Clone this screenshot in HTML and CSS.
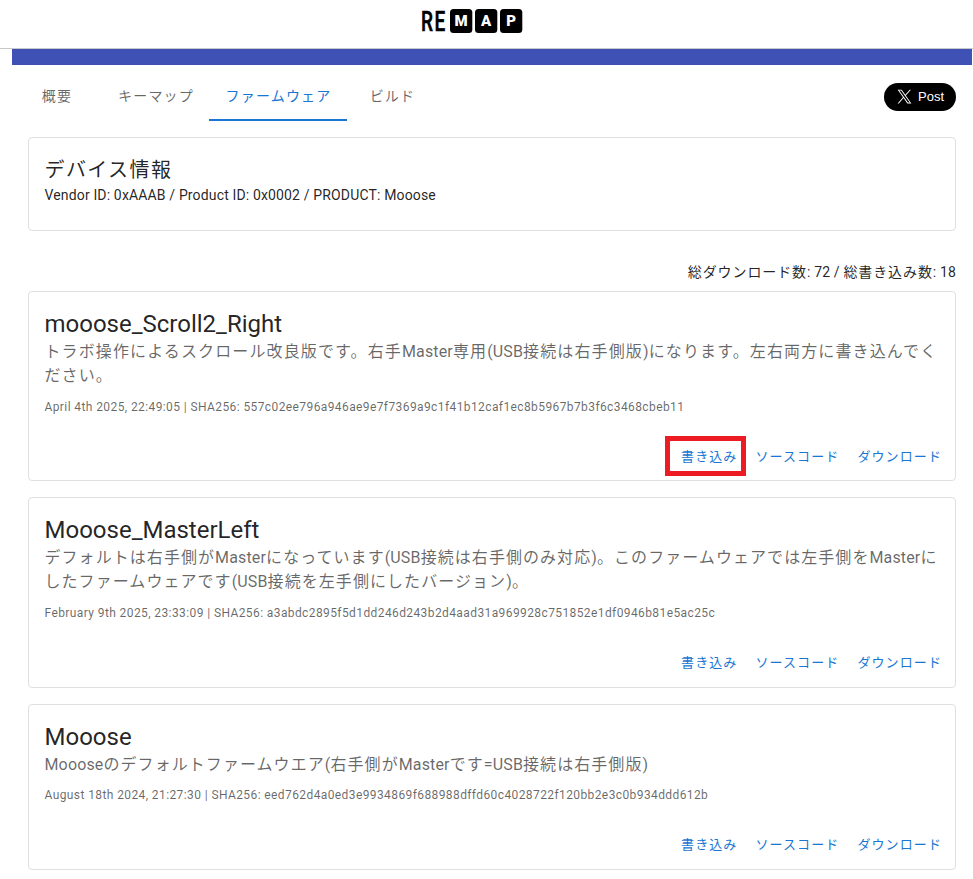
FILE: index.html
```html
<!DOCTYPE html>
<html lang="ja">
<head>
<meta charset="utf-8">
<title>Remap</title>
<link rel="stylesheet" href="styles.css">
</head>
<body>
<header class="header">
  <svg class="logo" width="104" height="48" viewBox="-2 -8 104 48" role="img" aria-label="REMAP">
    <text class="logo-re" transform="translate(-0.1 23.3) scale(.68 1)">RE</text>
    <rect x="29" y="1" width="22.3" height="24" rx="3.5"/>
    <rect x="54" y="1" width="22.3" height="24" rx="3.5"/>
    <rect x="79" y="1" width="22.3" height="24" rx="3.5"/>
    <g class="logo-map">
      <text x="40.2" y="18.3">M</text>
      <text x="65.2" y="18.3">A</text>
      <text x="90.2" y="18.3">P</text>
    </g>
  </svg>
</header>
<main class="page">
  <div class="banner"></div>
  <div class="toolbar">
    <nav class="tabs">
      <a class="tab">概要</a>
      <a class="tab">キーマップ</a>
      <a class="tab active">ファームウェア</a>
      <a class="tab">ビルド</a>
    </nav>
    <a class="post">
      <svg width="15" height="15" viewBox="0 0 24 24"><path fill="#fff" d="M14.1 10.3 22.3 1h-2l-7.1 8.1L7.5 1H1l8.6 12.2L1 23h2l7.5-8.6 6 8.6H23zm-2.6 3-.9-1.2L3.6 2.400h3l5.600 7.800.9 1.200 7.300 10.200h-3z"/></svg>
      <span>Post</span>
    </a>
  </div>
  <section class="card device">
    <h2 class="device-title">デバイス情報</h2>
    <p class="device-text">Vendor ID: 0xAAAB / Product ID: 0x0002 / PRODUCT: Mooose</p>
  </section>
  <p class="counts"><span class="ja">総ダウンロード数</span>: 72 / <span class="ja">総書き込み数</span>: 18</p>
  <section class="card">
    <div class="content">
      <h3 class="title">mooose_Scroll2_Right</h3>
      <p class="desc"><span class="ja">トラボ操作によるスクロール改良版です。右手</span>Master<span class="ja">専用</span>(USB<span class="ja">接続は右手側版</span>)<span class="ja">になります。左右両方に書き込んでく<br>ださい。</span></p>
      <p class="meta">April 4th 2025, 22:49:05 | SHA256: 557c02ee796a946ae9e7f7369a9c1f41b12caf1ec8b5967b7b3f6c3468cbeb11</p>
    </div>
    <div class="actions"><a class="btn marked">書き込み</a><a class="btn">ソースコード</a><a class="btn">ダウンロード</a></div>
  </section>
  <section class="card">
    <div class="content">
      <h3 class="title">Mooose_MasterLeft</h3>
      <p class="desc tight"><span class="ja">デフォルトは右手側が</span>Master<span class="ja">になっています</span>(USB<span class="ja">接続は右手側のみ対応</span>)<span class="ja">。このファームウェアでは左手側を</span>Master<span class="ja">に<br>したファームウェアです</span>(USB<span class="ja">接続を左手側にしたバージョン</span>)<span class="ja">。</span></p>
      <p class="meta">February 9th 2025, 23:33:09 | SHA256: a3abdc2895f5d1dd246d243b2d4aad31a969928c751852e1df0946b81e5ac25c</p>
    </div>
    <div class="actions"><a class="btn">書き込み</a><a class="btn">ソースコード</a><a class="btn">ダウンロード</a></div>
  </section>
  <section class="card">
    <div class="content">
      <h3 class="title">Mooose</h3>
      <p class="desc tight">Mooose<span class="ja">のデフォルトファームウエア</span>(<span class="ja">右手側が</span>Master<span class="ja">です</span>=USB<span class="ja">接続は右手側版</span>)</p>
      <p class="meta">August 18th 2024, 21:27:30 | SHA256: eed762d4a0ed3e9934869f688988dffd60c4028722f120bb2e3c0b934ddd612b</p>
    </div>
    <div class="actions"><a class="btn">書き込み</a><a class="btn">ソースコード</a><a class="btn">ダウンロード</a></div>
  </section>
</main>
</body>
</html>
```
FILE: styles.css
```css
*, *::after { box-sizing: border-box; }
body {
  margin: 0;
  background: #fff;
  color: rgba(0, 0, 0, .87);
  font-family: Roboto, "Noto Sans CJK JP", sans-serif;
}
h2, h3, p { margin: 0; font-weight: 400; }
.header {
  height: 49px;
  padding-right: 31px;
  border-bottom: 1px solid #c8c8c8;
  display: flex;
  justify-content: center;
}
.logo { display: block; }
.logo-re {
  font: 500 28px Roboto, sans-serif;
  letter-spacing: 2.5px;
  stroke: #000;
  stroke-width: .6;
}
.logo-map { font: 900 15px Roboto, sans-serif; fill: #fff; text-anchor: middle; }
.page { width: 960px; margin-left: 12px; }
.banner { height: 16px; background: #3f51b5; }
.toolbar {
  display: flex;
  justify-content: space-between;
  align-items: center;
  padding: 8px 16px 0 0;
}
.tabs { display: flex; }
.tab {
  min-width: 90px;
  height: 48px;
  padding: 0 16px 2px;
  display: flex;
  align-items: center;
  justify-content: center;
  font-size: 14px;
  letter-spacing: 1.2px;
  color: rgba(0, 0, 0, .6);
  border-bottom: 2px solid transparent;
}
.tab:nth-child(2) { padding-right: 15px; }
.tab.active { color: #1976d2; border-color: #1976d2; padding-left: 16.5px; }
.post {
  width: 72px;
  height: 28px;
  padding: 0 0 1px 1px;
  border-radius: 14px;
  background: #000;
  color: #fff;
  display: flex;
  align-items: center;
  justify-content: center;
  gap: 6px;
  font: 500 13px "Liberation Sans", sans-serif;
}
.card {
  margin: 0 16px 16px;
  border: 1px solid #e0e0e0;
  border-radius: 4px;
}
.device { height: 94px; margin-top: 16px; padding: 16px 15.5px; }
.device-title { font-size: 20px; line-height: 32px; letter-spacing: 1.4px; }
.device-text { margin-top: -1px; font-size: 14px; line-height: 20px; letter-spacing: .15px; }
.counts {
  margin: 31px 16px 9px;
  text-align: right;
  font-size: 14px;
  line-height: 20px;
  letter-spacing: .15px;
}
.counts .ja { letter-spacing: .9px; }
.content { padding: 16px 15.5px; }
.title { font-size: 24px; line-height: 32px; }
.desc {
  font-size: 16px;
  line-height: 24px;
  letter-spacing: .15px;
  color: rgba(0, 0, 0, .6);
  white-space: nowrap;
}
.desc .ja { letter-spacing: 1.12px; }
.desc.tight .ja { letter-spacing: 1.06px; }
.meta {
  margin: 8.5px 0 1px;
  font-size: 12px;
  line-height: 20px;
  letter-spacing: .4px;
  color: rgba(0, 0, 0, .6);
}
.actions { display: flex; justify-content: flex-end; gap: 8px; padding: 8px; }
.btn {
  position: relative;
  padding: 4px 5px;
  font-size: 13px;
  line-height: 22.75px;
  letter-spacing: 1.1px;
  color: #1976d2;
}
.marked::after {
  content: "";
  position: absolute;
  left: -11px;
  top: -6px;
  width: 81px;
  height: 40px;
  border: 5px solid #ed1c24;
}
```
